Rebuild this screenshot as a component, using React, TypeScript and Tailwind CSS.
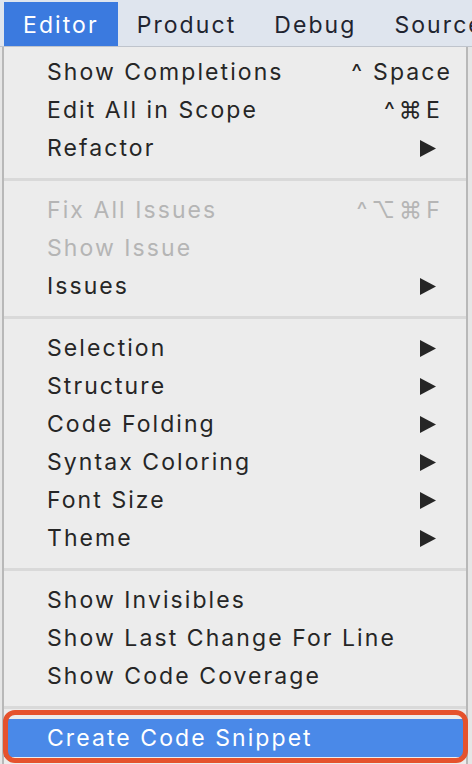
import type { ReactNode } from 'react';

type Item = {
  label: string;
  shortcut?: string;
  submenu?: boolean;
  disabled?: boolean;
  keyName?: string;
};

const groups: Item[][] = [
  [
    { label: 'Show Completions', keyName: 'Space' },
    { label: 'Edit All in Scope', shortcut: '^⌘E' },
    { label: 'Refactor', submenu: true },
  ],
  [
    { label: 'Fix All Issues', shortcut: '^⌥⌘F', disabled: true },
    { label: 'Show Issue', disabled: true },
    { label: 'Issues', submenu: true },
  ],
  [
    { label: 'Selection', submenu: true },
    { label: 'Structure', submenu: true },
    { label: 'Code Folding', submenu: true },
    { label: 'Syntax Coloring', submenu: true },
    { label: 'Font Size', submenu: true },
    { label: 'Theme', submenu: true },
  ],
  [
    { label: 'Show Invisibles' },
    { label: 'Show Last Change For Line' },
    { label: 'Show Code Coverage' },
  ],
];

const font = { fontFamily: 'Inter, "Noto Sans", sans-serif' };

function Arrow() {
  return (
    <svg width="16" height="17" viewBox="0 0 16 17" className="shrink-0">
      <polygon points="0,0 16,8.5 0,17" fill="#262626" />
    </svg>
  );
}

function Row({ item }: { item: Item }) {
  return (
    <div
      className={`flex h-[38px] items-center justify-between pl-[43px] ${item.submenu ? 'pr-[30px]' : 'pr-[22px]'} ${
        item.disabled ? 'text-[#b5b5b5]' : 'text-[#262626]'
      }`}
    >
      <span>{item.label}</span>
      {item.shortcut && <span className="tracking-[0.18em]">{item.shortcut}</span>}
      {item.keyName && (
        <span className="-mr-[8px] flex items-center">
          <span className="mr-[9px]">^</span>
          <span>{item.keyName}</span>
        </span>
      )}
      {item.submenu && <Arrow />}
    </div>
  );
}

function Separator() {
  return (
    <div className="flex h-[24px] items-center">
      <div className="h-[3px] w-full bg-[#d9d9d9]" />
    </div>
  );
}

function MenuTitle({ children, active = false }: { children: ReactNode; active?: boolean }) {
  return (
    <div
      className={`flex h-[44px] shrink-0 items-center px-[19px] pt-[2px] ${active ? 'bg-[#3b7adf] text-white' : 'text-[#1f2430]'}`}
    >
      {children}
    </div>
  );
}

export default function App() {
  return (
    <div
      className="relative h-[764px] w-[472px] overflow-hidden bg-[#e6e6e6] text-[23px] tracking-[0.09em]"
      style={font}
    >
      <div className="flex h-[47px] items-start overflow-hidden border-b border-[#bfc4cc] bg-[#dfe5ee] pl-[4px] pt-[2px]">
        <MenuTitle active>Editor</MenuTitle>
        <MenuTitle>Product</MenuTitle>
        <MenuTitle>Debug</MenuTitle>
        <MenuTitle>Source</MenuTitle>
      </div>

      <div className="ml-[2px] w-[466px] border-x-2 border-[#b8b8b8] bg-[#ececec] pt-[6px]">
        {groups.map((group, i) => (
          <div key={i}>
            {group.map(item => (
              <Row key={item.label} item={item} />
            ))}
            <Separator />
          </div>
        ))}
        <div className="flex h-[38px] items-center bg-[#4a89e8] pl-[43px] text-white">Create Code Snippet</div>
        <div className="h-[20px]" />
      </div>

      <div className="absolute left-[3px] top-[710px] h-[53px] w-[465px] rounded-[12px] border-[5px] border-[#e5522d]" />
    </div>
  );
}
